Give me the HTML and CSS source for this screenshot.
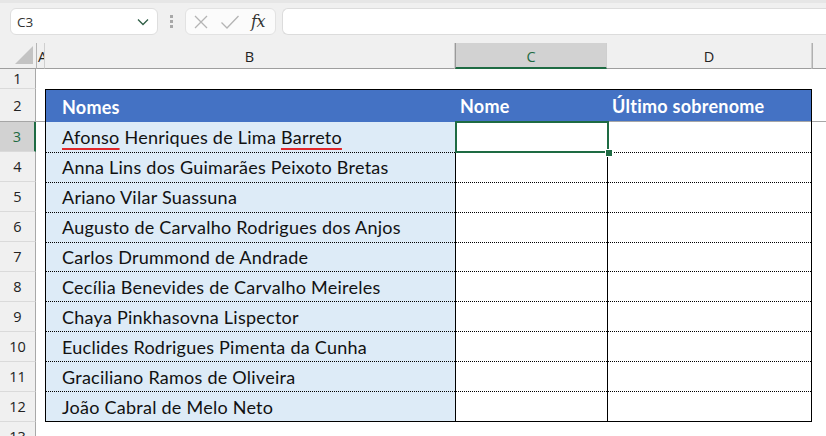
FILE: index.html
```html
<!DOCTYPE html>
<html lang="pt">
<head>
<meta charset="utf-8">
<title>Planilha - Nomes</title>
<link rel="stylesheet" href="styles.css">
</head>
<body>
<div class="app">
  <div class="toolbar">
    <div class="namebox">
      <span class="ref">C3</span>
      <svg class="chev" width="12" height="8" viewBox="0 0 12 8"><polyline points="1,1.5 6,6.5 11,1.5" fill="none" stroke="#2f5e45" stroke-width="1.3"/></svg>
    </div>
    <div class="grip"><i></i><i></i><i></i></div>
    <div class="fxbox">
      <svg class="ico" width="16" height="16" viewBox="0 0 16 16"><path d="M2 2 L14 14 M14 2 L2 14" stroke="#b4b4b4" stroke-width="1.3" fill="none"/></svg>
      <svg class="ico" width="20" height="16" viewBox="0 0 20 16"><polyline points="1.5,8.5 7,14 18.5,2" stroke="#b4b4b4" stroke-width="1.3" fill="none"/></svg>
      <span class="fx">fx</span>
    </div>
    <div class="formula"></div>
  </div>

  <div class="sheet">
    <!-- column headers -->
    <div class="corner"><svg width="18" height="18" viewBox="0 0 18 18"><polygon points="18,0 18,18 0,18" fill="#c3c3c3"/></svg></div>
    <div class="colhdr col-a">A</div>
    <div class="colhdr">B</div>
    <div class="colhdr active">C</div>
    <div class="colhdr">D</div>
    <div class="colhdr last"></div>

    <!-- data table: B2:D12 -->
    <div class="table">
      <div class="th first"><span>Nomes</span></div>
      <div class="th mid"><span>Nome</span></div>
      <div class="th mid"><span>Último sobrenome</span></div>

      <div class="td name top"><span><span class="sp">Afonso</span> Henriques de Lima <span class="sp">Barreto</span></span></div>
      <div class="td vline top current"><div class="sel"><i class="handle"></i></div></div>
      <div class="td vline top"></div>

      <div class="td name"><span>Anna Lins dos Guimarães Peixoto Bretas</span></div><div class="td vline"></div><div class="td vline"></div>
      <div class="td name"><span>Ariano Vilar Suassuna</span></div><div class="td vline"></div><div class="td vline"></div>
      <div class="td name"><span>Augusto de Carvalho Rodrigues dos Anjos</span></div><div class="td vline"></div><div class="td vline"></div>
      <div class="td name"><span>Carlos Drummond de Andrade</span></div><div class="td vline"></div><div class="td vline"></div>
      <div class="td name"><span>Cecília Benevides de Carvalho Meireles</span></div><div class="td vline"></div><div class="td vline"></div>
      <div class="td name"><span>Chaya Pinkhasovna Lispector</span></div><div class="td vline"></div><div class="td vline"></div>
      <div class="td name"><span>Euclides Rodrigues Pimenta da Cunha</span></div><div class="td vline"></div><div class="td vline"></div>
      <div class="td name"><span>Graciliano Ramos de Oliveira</span></div><div class="td vline"></div><div class="td vline"></div>
      <div class="td name"><span>João Cabral de Melo Neto</span></div><div class="td vline"></div><div class="td vline"></div>
    </div>

    <!-- row 1 -->
    <div class="rowhdr">1</div><div class="cell"></div><div class="cell wide"></div>
    <!-- row 2 (frozen) -->
    <div class="rowhdr frozen">2</div><div class="cell frozen"></div><div class="cell frozen"></div>
    <!-- rows 3-12 -->
    <div class="rowhdr active">3</div><div class="cell"></div><div class="cell"></div>
    <div class="rowhdr">4</div><div class="cell"></div><div class="cell"></div>
    <div class="rowhdr">5</div><div class="cell"></div><div class="cell"></div>
    <div class="rowhdr">6</div><div class="cell"></div><div class="cell"></div>
    <div class="rowhdr">7</div><div class="cell"></div><div class="cell"></div>
    <div class="rowhdr">8</div><div class="cell"></div><div class="cell"></div>
    <div class="rowhdr">9</div><div class="cell"></div><div class="cell"></div>
    <div class="rowhdr">10</div><div class="cell"></div><div class="cell"></div>
    <div class="rowhdr">11</div><div class="cell"></div><div class="cell"></div>
    <div class="rowhdr">12</div><div class="cell"></div><div class="cell"></div>
    <!-- row 13 -->
    <div class="rowhdr">13</div><div class="cell wide13"></div>
  </div>
</div>
</body>
</html>
```

FILE: styles.css
```css
* { box-sizing: border-box; }

html, body {
  margin: 0;
  padding: 0;
  background: #ffffff;
  overflow: hidden;
}

.app {
  width: 826px;
  height: 436px;
  overflow: hidden;
  font-family: "Open Sans", "Noto Sans", sans-serif;
  color: #222;
}

/* ---------- formula bar ---------- */
.toolbar {
  height: 43px;
  background: #f0f0f0;
  border-top: 3px solid #e6e6e6;
  display: flex;
  align-items: flex-start;
  padding: 5px 0 0 10px;
}

.namebox {
  width: 148px;
  height: 27px;
  background: #fff;
  border: 1px solid #dedede;
  border-radius: 6px;
  display: flex;
  align-items: center;
  justify-content: space-between;
  padding: 0 8px 0 6px;
}

.namebox .ref {
  font-size: 13.5px;
  color: #333;
}

.grip {
  width: 27px;
  height: 27px;
  display: flex;
  flex-direction: column;
  align-items: center;
  justify-content: center;
  gap: 2px;
}

.grip i {
  display: block;
  width: 3px;
  height: 3px;
  background: #a8a8a8;
}

.fxbox {
  width: 91px;
  height: 27px;
  background: #fbfbfb;
  border: 1px solid #e2e2e2;
  border-radius: 6px;
  display: flex;
  align-items: center;
  gap: 8px;
  padding: 0 0 0 7px;
}

.fxbox .ico { flex: none; }
.fxbox .ico + .ico { margin-left: 3px; }

.fx {
  font-family: "DejaVu Serif", "Liberation Serif", serif;
  font-style: italic;
  font-size: 16px;
  color: #333;
  margin-left: 3px;
  letter-spacing: -0.5px;
}

.formula {
  flex: 1;
  height: 27px;
  margin-left: 6px;
  background: #fff;
  border: 1px solid #dcdcdc;
  border-right: none;
  border-radius: 6px 0 0 6px;
}

/* ---------- grid ---------- */
.sheet {
  display: grid;
  grid-template-columns: 36px 9px 410px 152px 205px 1fr;
  grid-template-rows: 26px 20px 33px repeat(10, 30px) 30px;
  background: #fff;
}

.corner {
  background: #f0f0f0;
  border-bottom: 1px solid #9e9e9e;
  display: flex;
  align-items: flex-end;
  justify-content: flex-end;
  padding: 0 3px 4px 0;
}

.colhdr {
  background: #f0f0f0;
  border-bottom: 1px solid #9e9e9e;
  border-right: 1px solid #cfcfcf;
  display: flex;
  align-items: center;
  justify-content: center;
  font-size: 14.5px;
  color: #222;
  overflow: hidden;
  padding-top: 2px;
}

.colhdr.col-a {
  border-left: 1px solid #b5b5b5;
  justify-content: flex-start;
  padding-left: 1px;
}

.colhdr.active {
  background: #d2d2d2;
  color: #1e6b43;
  border-left: 1px solid #9a9a9a;
  border-bottom: 2px solid #1e6b43;
}

.colhdr.last {
  border-right: none;
  border-left: 1px solid #b0b0b0;
}

.rowhdr {
  grid-column: 1;
  background: #f0f0f0;
  border-right: 1px solid #a8a8a8;
  border-bottom: 1px solid #dadada;
  display: flex;
  align-items: center;
  justify-content: center;
  font-size: 14.5px;
  color: #222;
}

.rowhdr.frozen { border-bottom: 1px solid #a6a6a6; }

.rowhdr.active {
  background: #d2d2d2;
  color: #1e6b43;
  border-right: 2px solid #1e6b43;
}

.cell { background: #fff; }
.cell.frozen { border-bottom: 1px solid #a6a6a6; }
.cell.wide { grid-column: 3 / 7; }
.cell.wide13 { grid-column: 2 / 7; }

/* ---------- data table ---------- */
.table {
  grid-column: 3 / 6;
  grid-row: 3 / 14;
  border: 1px solid #000;
  display: grid;
  grid-template-columns: 409px 152px 1fr;
  grid-template-rows: 32px repeat(10, 1fr);
  font-family: "Lato", "Open Sans", sans-serif;
  font-size: 18px;
  letter-spacing: 0.25px;
  color: #111;
}

.th {
  background: #4472c4;
  color: #fff;
  font-weight: bold;
  display: flex;
  align-items: center;
  padding-top: 1px;
}

.th.first { padding-left: 16px; }
.th.mid {
  padding-left: 5px;
  border-bottom: 1px solid #a6a6a6;
}

.td {
  display: flex;
  align-items: center;
  border-top: 1px dotted #000;
  white-space: nowrap;
}

.td.top { border-top: none; }

.td.name {
  background: #ddebf7;
  padding-left: 16px;
}

.td.vline { border-left: 1px solid #000; }

.sp {
  text-decoration: underline;
  text-decoration-color: #e0262a;
  text-decoration-thickness: 2px;
  text-underline-offset: 4px;
}

/* active cell outline with fill handle */
.current { position: relative; }

.sel {
  position: absolute;
  left: -1px;
  top: -1px;
  right: -2px;
  bottom: -1px;
  border: 2px solid #1e6b43;
}

.handle {
  position: absolute;
  right: -5px;
  bottom: -5px;
  width: 6px;
  height: 6px;
  background: #1e6b43;
  outline: 1px solid #fff;
}
```
